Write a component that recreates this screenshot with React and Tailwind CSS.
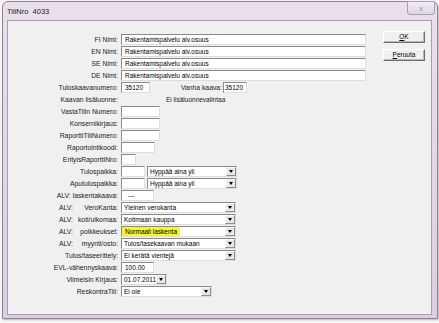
import React from 'react';

const sunken = 'bg-white border border-t-[#8a8a8a] border-l-[#8a8a8a] border-r-[#dedede] border-b-[#dedede]';

const rows = [
    { label: 'FI Nimi:', kind: 'text', w: 'w-[245px]', value: 'Rakentamispalvelu alv.osuus' },
    { label: 'EN Nimi:', kind: 'text', w: 'w-[245px]', value: 'Rakentamispalvelu alv.osuus' },
    { label: 'SE Nimi:', kind: 'text', w: 'w-[245px]', value: 'Rakentamispalvelu alv.osuus' },
    { label: 'DE Nimi:', kind: 'text', w: 'w-[245px]', value: 'Rakentamispalvelu alv.osuus' },
    { label: 'Tuloskaavanumero:', kind: 'kaava' },
    { label: 'Kaavan lisäluonne:', kind: 'note', value: 'Ei lisäluonnevalintaa' },
    { label: 'VastaTilin Numero:', kind: 'text', w: 'w-[39px]' },
    { label: 'Konsernikirjaus:', kind: 'text', w: 'w-[39px]' },
    { label: 'RaporttiTiliNumero:', kind: 'text', w: 'w-[39px]' },
    { label: 'Raportointikoodi:', kind: 'text', w: 'w-[34px]' },
    { label: 'ErityisRaporttiNro:', kind: 'text', w: 'w-[15px]' },
    { label: 'Tulospaikka:', kind: 'paikka', value: 'Hyppää aina yli' },
    { label: 'Aputulospaikka:', kind: 'paikka', value: 'Hyppää aina yli' },
    { label: 'ALV: laskentakaava:', kind: 'text', w: 'w-[33px]', value: '---', pad: 'pl-[6px]' },
    { label: 'VeroKanta:', alv: true, kind: 'combo', w: 'w-[115px]', value: 'Yleinen verokanta' },
    { label: 'koti/ulkomaa:', alv: true, kind: 'combo', w: 'w-[115px]', value: 'Kotimaan kauppa' },
    { label: 'poikkeukset:', alv: true, kind: 'combo', w: 'w-[115px]', value: 'Normaali laskenta', mark: true },
    { label: 'myynti/osto:', alv: true, kind: 'combo', w: 'w-[115px]', value: 'Tulos/tasekaavan mukaan' },
    { label: 'Tulos/taseerittely:', kind: 'combo', w: 'w-[115px]', value: 'Ei kerätä vientejä' },
    { label: 'EVL-vähennyskaava:', kind: 'text', w: 'w-[33px]', value: '100.00' },
    { label: 'Viimeisin Kirjaus:', kind: 'combo', w: 'w-[46px]', value: '01.07.2011' },
    { label: 'ReskontraTili:', kind: 'combo', w: 'w-[91px]', value: 'Ei ole' },
];

const TextBox = ({ w, value, pad = 'pl-[3px]' }) => (
    <div className={`${w} h-[11px] ${sunken} ${pad} text-[6.5px] leading-[9px] whitespace-nowrap overflow-hidden`}>
        {value}
    </div>
);

const Combo = ({ w, value, mark }) => (
    <div className={`${w} h-[11px] ${sunken} flex`}>
        <div className="flex-1 text-[6.5px] leading-[9px] whitespace-nowrap overflow-hidden pl-[2px]">
            {mark ? (
                <span className="relative -ml-[3px] pl-[4px] pr-[3px] inline-block h-[10px] -mt-[1px] leading-[10px] bg-[#f6f43a] rounded-[2px]">{value}</span>
            ) : value}
        </div>
        <div className="w-[10px] h-[9px] bg-[#e8e8e8] border-t border-l border-t-[#f8f8f8] border-l-[#f8f8f8] border-r border-b border-r-[#8c8c8c] border-b-[#8c8c8c] flex items-center justify-center">
            <svg width="4" height="3" viewBox="0 0 4 3"><path d="M0 0h4L2 3z" fill="#000" /></svg>
        </div>
    </div>
);

const Field = ({ row }) => {
    if (row.kind === 'text') return <TextBox w={row.w} value={row.value} pad={row.pad} />;
    if (row.kind === 'combo') return <Combo w={row.w} value={row.value} mark={row.mark} />;
    if (row.kind === 'note') return <span className="ml-[45px] text-[6.5px] leading-[11px] text-[#222]">{row.value}</span>;
    if (row.kind === 'kaava') return (
        <div className="flex">
            <TextBox w="w-[29px]" value="35120" />
            <span className="w-[73px] text-right text-[6.8px] leading-[11px] pr-[1px] text-[#222]">Vanha kaava:</span>
            <TextBox w="w-[24px]" value="35120" pad="pl-[1px]" />
        </div>
    );
    // paikka: small box + combo
    return (
        <div className="flex gap-[2px]">
            <TextBox w="w-[24px]" />
            <Combo w="w-[90px]" value={row.value} />
        </div>
    );
};

const Button = ({ children }) => (
    <div className="w-[42px] h-[12px] bg-[#f0f0f0] border border-t-[#ffffff] border-l-[#ffffff] border-r-[#6e6e6e] border-b-[#6e6e6e] shadow-[inset_-1px_-1px_0_#b8b8b8] flex items-center justify-center text-[6.5px] leading-none">
        {children}
    </div>
);

export default function App() {
    return (
        <div className="w-[439px] h-[323px] bg-[#f6f6f6] overflow-hidden font-['Liberation_Sans',Arial,sans-serif] text-black">
            <div className="ml-[2px] mt-[1px] w-[436px] h-[318px] rounded-t-[6px] border border-[#8a8590] bg-gradient-to-b from-[#e9e0eb] to-[#dccee0] flex flex-col shadow-[1px_1px_2px_rgba(0,0,0,0.25)]">
                {/* Title bar */}
                <div className="h-[18px] flex items-start justify-between pl-[4px] pr-[2px]">
                    <span className="mt-[5px] text-[7.5px] leading-[9px] text-[#1b1b1b] whitespace-pre">TiliNro  4033</span>
                    <div className="-mt-[1px] w-[28px] h-[14px] rounded-b-[3px] border border-[#a59eab] bg-gradient-to-b from-[#f1ecf2] to-[#e0d6e3] flex items-center justify-center text-[7px] text-[#8d8791] leading-none">
                        x
                    </div>
                </div>

                {/* Client area */}
                <div className="ml-[4px] mr-[5px] mb-[3px] flex-1 bg-[#f0f0f0] border border-[#a99daf] flex">
                    <div className="pt-[13px] flex flex-col">
                        {rows.map((row, idx) => (
                            <div key={idx} className="flex h-[12px] items-start">
                                <div className={`w-[110px] text-[6.8px] leading-[11px] whitespace-nowrap text-[#222] ${row.alv ? 'flex justify-between pl-[51px]' : 'text-right'}`}>
                                    {row.alv ? (<><span>ALV:</span><span>{row.label}</span></>) : row.label}
                                </div>
                                <div className="ml-[3px] flex items-start">
                                    <Field row={row} />
                                </div>
                            </div>
                        ))}
                    </div>
                    <div className="ml-auto mr-[6px] mt-[10px] flex flex-col gap-[6px]">
                        <Button><span className="underline">O</span>K</Button>
                        <Button><span className="underline">P</span>eruuta</Button>
                    </div>
                </div>
            </div>
        </div>
    );
}
